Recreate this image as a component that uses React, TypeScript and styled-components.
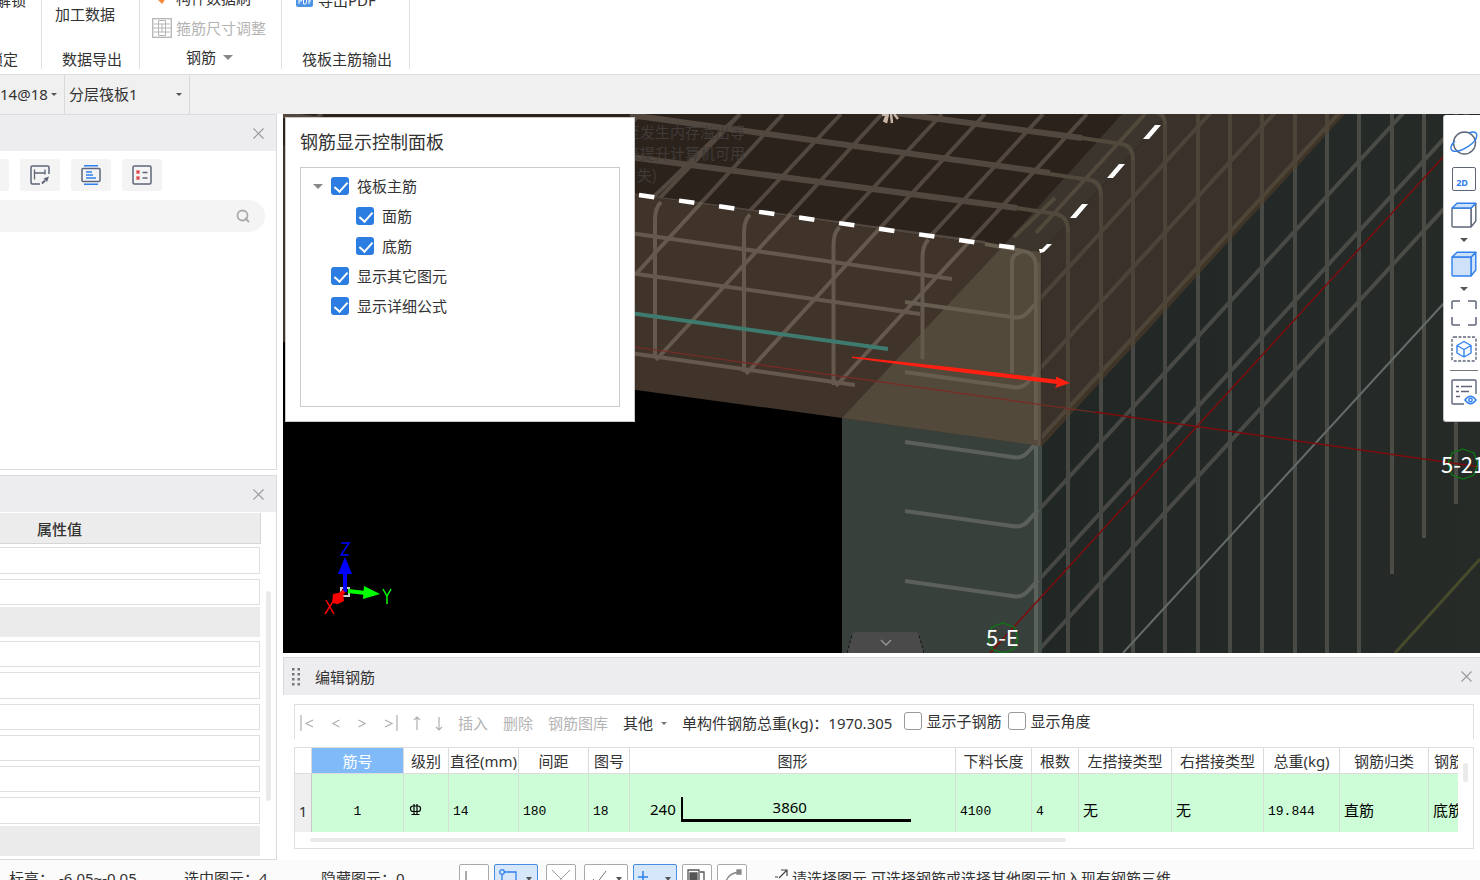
import React from "react";
import styled, { createGlobalStyle } from "styled-components";

const GlobalStyle = createGlobalStyle`
  * { box-sizing: border-box; }
  body {
    margin: 0;
    overflow: hidden;
    background: #fff;
    color: #333;
    font: 15px/20px "Noto Sans", "Noto Sans CJK SC", sans-serif;
  }
  button, input, select { font: inherit; color: inherit; }
  svg { display: block; flex: none; }
`;

const Shell = styled.div`
  display: flex;
  flex-direction: column;
  height: 100vh;
  overflow: hidden;
`;

const PlainButton = styled.button<{ $dim?: boolean; $gap?: number }>`
  display: flex;
  align-items: center;
  gap: ${(p) => p.$gap || 0}px;
  flex: none;
  padding: 0;
  border: 0;
  background: none;
  white-space: nowrap;
  color: ${(p) => (p.$dim ? "#b4b4b4" : "#333")};
`;

/* ---------- ribbon ---------- */

const Ribbon = styled.header`
  display: flex;
  flex: none;
  height: 75px;
  padding-bottom: 5px;
  border-bottom: 1px solid #dcdcdc;
  overflow: hidden;
`;

const RibbonGroup = styled.section<{ $width: number; $align?: string }>`
  display: flex;
  flex-direction: column;
  justify-content: flex-end;
  align-items: ${(p) => p.$align || "flex-start"};
  flex: none;
  width: ${(p) => p.$width}px;
  border-right: 1px solid #dedee2;
`;

const RibbonItem = styled.div<{ $left?: number; $right?: number; $below: number }>`
  flex: none;
  margin: 0 ${(p) => p.$right || 0}px ${(p) => p.$below}px ${(p) => p.$left || 0}px;
  height: 20px;
  white-space: nowrap;
`;

/* ---------- selector bar ---------- */

const SelectorBar = styled.nav`
  display: flex;
  flex: none;
  height: 39px;
  background: #f0f0f0;
`;

const Picker = styled.div<{ $width: number }>`
  display: flex;
  align-items: center;
  justify-content: space-between;
  flex: none;
  width: ${(p) => p.$width}px;
  padding: 0 7px 1px 0;
  border-right: 1px solid #d9d9d9;
`;

const PickerSelect = styled.select<{ $inset: number }>`
  flex: 1;
  min-width: 0;
  padding: 0 0 0 ${(p) => p.$inset}px;
  border: 0;
  background: none;
  appearance: none;
`;

/* ---------- body ---------- */

const Body = styled.main`
  display: grid;
  grid-template-columns: 277px minmax(0, 1fr);
  gap: 6px;
  flex: 1;
  min-height: 0;
`;

const LeftColumn = styled.aside`
  display: grid;
  grid-template-rows: 356fr 384fr;
  gap: 5px;
  min-height: 0;
`;

const Panel = styled.section`
  display: flex;
  flex-direction: column;
  min-height: 0;
  border: solid #dcdce0;
  border-width: 1px 1px 1px 0;
`;

const PanelHeader = styled.div`
  display: flex;
  align-items: center;
  justify-content: flex-end;
  flex: none;
  height: 36px;
  padding-right: 12px;
  background: #ededf0;
`;

const ToolRow = styled.div`
  display: flex;
  gap: 11px;
  margin: 8px 0 0 -31px;
`;

const ToolButton = styled.button`
  display: grid;
  place-items: center;
  width: 40px;
  height: 32px;
  padding: 0;
  border: 0;
  border-radius: 3px;
  background: #f4f4f5;
`;

const SearchBox = styled.label`
  display: flex;
  align-items: center;
  height: 32px;
  margin: 9px 11px 0 0;
  padding-right: 15px;
  border-radius: 0 16px 16px 0;
  background: #f4f4f4;
`;

const SearchInput = styled.input`
  flex: 1;
  min-width: 0;
  border: 0;
  background: none;
  outline: none;
`;

const PropertyArea = styled.div`
  display: flex;
  flex: 1;
  min-height: 0;
  padding: 1px 5px 2px 0;
`;

const PropertyList = styled.div`
  display: flex;
  flex-direction: column;
  flex: 1;
  padding-right: 6px;
`;

const PropertyHead = styled.div`
  flex: none;
  height: 31px;
  margin-right: -1px;
  padding: 6px 37px;
  border: solid #d6d6d6;
  border-width: 0 1px 1px 0;
  background: #ececec;
  font-weight: 500;
`;

const PropertyRows = styled.div`
  display: grid;
  grid-auto-rows: minmax(0, 1fr);
  flex: 1;
  min-height: 0;
`;

const PropertyRow = styled.div<{ $group?: boolean }>`
  display: flex;
  min-height: 0;
  padding: ${(p) => (p.$group ? "0 0 1px" : "3px 0 2px")};
`;

const PropertyGroup = styled.div`
  flex: 1;
  background: #ebebeb;
`;

const PropertyInput = styled.input`
  flex: 1;
  min-width: 0;
  border: solid #dfdfdf;
  border-width: 1px 1px 1px 0;
  background: #fff;
`;

const VerticalThumb = styled.div<{ $top: number; $height: number }>`
  flex: none;
  width: 5px;
  height: ${(p) => p.$height}px;
  margin-top: ${(p) => p.$top}px;
  border-radius: 3px;
  background: #eaeaea;
`;

/* ---------- 3D view ---------- */

const RightColumn = styled.div`
  display: grid;
  grid-template-rows: minmax(0, 1fr) auto;
  gap: 4px;
  min-height: 0;
`;

const Viewport = styled.section`
  position: relative;
  min-height: 0;
  overflow: hidden;
  background: #000;
`;

const SceneSvg = styled.svg`
  width: 100%;
  height: 100%;
`;

const DisplayPanel = styled.section`
  position: absolute;
  top: 3px;
  left: 2px;
  width: 350px;
  height: 305px;
  padding: 13px 14px;
  border: 1px solid #c9c9c9;
  background: #fff;
`;

const DisplayTitle = styled.h2`
  margin: 0 0 14px;
  font-size: 18px;
  font-weight: 400;
  line-height: 22px;
`;

const Tree = styled.div`
  height: 240px;
  padding-top: 3px;
  border: 1px solid #ccc;
`;

const TreeRow = styled.div<{ $depth: number }>`
  display: flex;
  align-items: center;
  gap: 8px;
  height: 30px;
  padding-left: ${(p) => 12 + p.$depth * 25}px;
`;

const TreeToggle = styled.span`
  width: 10px;
`;

const CheckLabel = styled.label<{ $gap: number }>`
  display: flex;
  align-items: center;
  gap: ${(p) => p.$gap}px;
  white-space: nowrap;
`;

const CheckInput = styled.input`
  appearance: none;
  flex: none;
  width: 18px;
  height: 18px;
  margin: 0;
  border: 1px solid #999;
  border-radius: 3px;
  background: #fff;
  &:checked {
    border: 0;
    background: #2b7de1;
  }
  &:checked::after {
    content: "";
    display: block;
    width: 6px;
    height: 11px;
    margin: 2px 0 0 6px;
    border: solid #fff;
    border-width: 0 2px 2px 0;
    transform: rotate(42deg);
  }
`;

const ViewRail = styled.div`
  position: absolute;
  top: 1px;
  right: 0;
  display: flex;
  flex-direction: column;
  width: 37px;
  padding: 10px 0 11px;
  border: solid #c4c4c4;
  border-width: 0 0 1px 1px;
  border-radius: 3px 0 0 3px;
  background: #fff;
`;

const RailButton = styled.button<{ $short?: boolean }>`
  display: flex;
  align-items: center;
  justify-content: center;
  height: ${(p) => (p.$short ? 13 : 36)}px;
  padding: 0 0 0 4px;
  border: 0;
  background: none;
`;

const RailDivider = styled.hr`
  width: 28px;
  margin: 3px 0 3px 6px;
  border: 0;
  border-top: 1px solid #777;
`;

const CollapseTab = styled.button`
  position: absolute;
  bottom: 0;
  left: 564px;
  width: 77px;
  height: 21px;
  padding: 0;
  border: 0;
  background: none;
`;

/* ---------- rebar editor ---------- */

const Editor = styled.section`
  border-top: 1px solid #d8d8dc;
  padding-bottom: 11px;
`;

const EditorHeader = styled.div`
  display: flex;
  align-items: center;
  gap: 15px;
  height: 37px;
  padding: 0 8px 0 8px;
  border-left: 1px solid #d8d8dc;
  background: #ededf0;
`;

const EditorTitle = styled.h2`
  flex: 1;
  margin: 0;
  font: inherit;
`;

const EditorTools = styled.div`
  display: flex;
  align-items: center;
  gap: 15px;
  height: 35px;
  margin: 9px 6px 8px 11px;
  padding: 2px 0 0 5px;
  border: solid #dedede;
  border-width: 1px 1px 0 1px;
`;

const NavGroup = styled.div<{ $gap: number }>`
  display: flex;
  gap: ${(p) => p.$gap}px;
`;

const Options = styled.div`
  display: flex;
  gap: 7px;
  margin: 0 0 4px -3px;
`;

const TableFrame = styled.div`
  display: grid;
  grid-template-columns: minmax(0, 1fr) 5px;
  column-gap: 5px;
  margin: 0 6px 0 11px;
  padding: 0 5px 6px 0;
  border: 1px solid #dedede;
`;

const RebarTable = styled.table`
  width: 100%;
  table-layout: fixed;
  border-collapse: separate;
  border-spacing: 0;
`;

const HeadCell = styled.th<{ $active?: boolean; $left?: boolean }>`
  height: 26px;
  padding: ${(p) => (p.$left ? "0 0 0 5px" : "0")};
  overflow: hidden;
  border: solid #dcdcdc;
  border-width: 0 ${(p) => (p.$left ? 0 : 1)}px 1px 0;
  background: ${(p) => (p.$active ? "#80baf8" : "#fff")};
  color: ${(p) => (p.$active ? "#fff" : "#333")};
  font-weight: 400;
  text-align: ${(p) => (p.$left ? "left" : "center")};
  white-space: nowrap;
`;

const RowHead = styled.th`
  height: 58px;
  padding: 15px 0 0;
  border-right: 1px solid #c9c9c9;
  background: #efefef;
  font-weight: 400;
`;

const Cell = styled.td<{ $center?: boolean; $last?: boolean }>`
  height: 58px;
  padding: ${(p) => (p.$center ? "14px 0 0" : "14px 0 0 4px")};
  overflow: hidden;
  border-right: ${(p) => (p.$last ? 0 : 1)}px solid #d5dfd5;
  background: #ccfdd6;
  color: #000;
  font: 15px/20px "Noto Sans CJK SC", sans-serif;
  text-align: ${(p) => (p.$center ? "center" : "left")};
  white-space: nowrap;
`;

const Mono = styled.span`
  font: 13px/20px "Liberation Mono", monospace;
`;

const ShapeCell = styled(Cell)`
  padding: 0 0 0 20px;
  font-family: "Noto Sans", sans-serif;
`;

const Shape = styled.div`
  display: flex;
  align-items: center;
  gap: 5px;
  padding-top: 12px;
`;

const BarOutline = styled.div`
  width: 230px;
  height: 25px;
  border: solid #000;
  border-width: 0 0 3px 2px;
  padding-right: 14px;
  text-align: center;
`;

const HorizontalThumb = styled.div`
  width: 65%;
  height: 4px;
  margin: 6px 0 0 15px;
  border-radius: 2px;
  background: #e9e9e9;
`;

/* ---------- status bar ---------- */

const StatusBar = styled.footer`
  display: flex;
  align-items: flex-start;
  flex: none;
  height: 20px;
  padding-left: 9px;
  background: #fbfbfb;
  white-space: nowrap;
`;

const StatusText = styled.span<{ $width: number }>`
  flex: none;
  width: ${(p) => p.$width}px;
  padding-top: 8px;
`;

const StatusButtons = styled.div`
  display: flex;
  gap: 5px;
  padding: 4px 28px 0 0;
`;

const StatusButton = styled.button<{ $wide?: boolean; $on?: boolean; $after?: number }>`
  display: flex;
  gap: 7px;
  flex: none;
  width: ${(p) => (p.$wide ? 44 : 30)}px;
  height: 30px;
  margin-right: ${(p) => p.$after || 0}px;
  padding: 4px 4px 0 4px;
  border: 1px solid ${(p) => (p.$on ? "#4a8de0" : "#aaa")};
  border-radius: 2px;
  background: ${(p) => (p.$on ? "#d6e6fb" : "#fff")};
`;

/* ---------- small drawings ---------- */

const CloseIcon = () => (
  <svg width="11" height="11" viewBox="0 0 11 11" stroke="#9a9a9e" strokeWidth="1.2">
    <path d="M.5.5l10 10M10.5.5l-10 10" />
  </svg>
);

const Caret = ({ size = 8, color = "#555" }: { size?: number; color?: string }) => (
  <svg width={size} height={size / 2} viewBox="0 0 8 4" fill={color}>
    <path d="M0 0h8L4 4z" />
  </svg>
);

const INK = "#5d6577";
const BLUE = "#2f80ed";

const IconH = () => (
  <svg width="20" height="20" viewBox="0 0 20 20" fill="none" stroke={INK} strokeWidth="1.5">
    <path d="M10 19H2.500Q1 19 1 17.500V2.500Q1 1 2.500 1H17.500Q19 1 19 2.500V9" />
    <path d="M4.500 4.500v10M4.500 8h10.500M15 4.500v5" strokeWidth="1.300" />
    <path d="M12 18.500l3-3" strokeWidth="2" />
    <path d="M13.500 13.500l3.500 3.500 2-5.500z" fill={INK} stroke="none" />
  </svg>
);

const IconLines = () => (
  <svg width="20" height="20" viewBox="0 0 20 20" fill="none">
    <rect x="1" y="3.500" width="18" height="13" rx="1" stroke={INK} strokeWidth="1.500" />
    <path d="M3 .8h14M3 19.200h14M5 7h6M5 10h7M5 13h10" stroke={BLUE} strokeWidth="1.400" />
  </svg>
);

const IconList = () => (
  <svg width="20" height="20" viewBox="0 0 20 20" fill="none">
    <rect x="1" y="1" width="18" height="18" rx="1.500" stroke={INK} strokeWidth="1.500" />
    <path d="M4.500 5.500l3 3m0-3l-3 3M4.500 11.500l3 3m0-3l-3 3" stroke="#e23c3c" strokeWidth="1.500" />
    <path d="M10.500 7.500h5M10.500 13h5" stroke={INK} strokeWidth="1.500" />
  </svg>
);

const IconStirrup = () => (
  <svg width="20" height="20" viewBox="0 0 20 20" fill="none" stroke="#b4b4b4">
    <rect x=".7" y=".7" width="18.600" height="18.600" strokeWidth="1.300" />
    <path d="M6.500 17.500v-15h7v15zM2 6h16M2 14h16M10 6v8M1 10h18" />
  </svg>
);

const IconBrush = () => (
  <svg width="14" height="12" viewBox="0 0 14 12">
    <path d="M0 5l7-5 5 5-5 7z" fill="#f58a3c" />
    <path d="M10 7l4-4v3z" fill="#5aa2f0" />
  </svg>
);

const IconPdf = () => (
  <svg width="17" height="14" viewBox="0 0 17 14">
    <rect width="17" height="14" rx="2" fill="#4d93e6" />
    <path d="M3 11V5h2.500v3H3M7.500 5v6H9q1.500 0 1.500-1.500v-3Q10.500 5 9 5zM13 11V5h2.500M13 8h2" fill="none" stroke="#fff" />
  </svg>
);

const IconCube = ({ filled }: { filled?: boolean }) => (
  <svg width="26" height="26" viewBox="0 0 26 26" strokeWidth="1.400" strokeLinejoin="round">
    <path d="M20 6l4.800-4.500V19L20 25z" fill={filled ? "#cfe1f9" : "#fff"} stroke={filled ? BLUE : INK} />
    <rect x="1" y="6" width="19" height="19" rx="1" fill={filled ? "#cfe1f9" : "#fff"} stroke={filled ? BLUE : INK} />
    <path d="M1 6l5-4.700h18.800L20 6z" fill="#cfe1f9" stroke={BLUE} />
  </svg>
);

const IconOrbit = () => (
  <svg width="28" height="26" viewBox="0 0 28 26" fill="none" strokeWidth="1.400">
    <circle cx="14.500" cy="13" r="11" stroke={INK} />
    <path d="M5 11C0 15 0 20 3 21c6 2 26-8 23.500-17C26 1.500 22 1.500 19 3" stroke={BLUE} />
  </svg>
);

const Label2D = styled.span`
  display: flex;
  align-items: flex-end;
  justify-content: center;
  width: 24px;
  height: 24px;
  padding: 0 4px 2px 0;
  border: 1px solid ${INK};
  border-radius: 2px;
  color: ${BLUE};
  font: 700 9px/10px "Noto Sans", sans-serif;
`;

const IconFit = () => (
  <svg width="26" height="26" viewBox="0 0 26 26" fill="none" stroke={INK} strokeWidth="1.500">
    <path d="M1 9V2Q1 1 2 1h7M17 1h7q1 0 1 1v7M25 17v7q0 1-1 1h-7M9 25H2q-1 0-1-1v-7" />
  </svg>
);

const IconIsolate = () => (
  <svg width="26" height="26" viewBox="0 0 26 26" fill="none" strokeWidth="1.400">
    <rect x="1" y="1" width="24" height="24" rx="2" stroke={INK} strokeDasharray="3 1.500" />
    <path d="M13 5.500l7 4v7.500l-7 4-7-4V9.500zM6 9.500l7 4 7-4M13 13.500V21" stroke={BLUE} strokeLinejoin="round" />
  </svg>
);

const IconListEye = () => (
  <svg width="26" height="26" viewBox="0 0 26 26" fill="none" strokeWidth="1.400">
    <path d="M13 25H2q-1 0-1-1V2q0-1 1-1h22q1 0 1 1v13" stroke={INK} />
    <path d="M5 7.500h3m2 0h11M5 12.500h3m2 0h8M5 17.500h4" stroke={INK} />
    <path d="M14 21q5.500-7.500 11 0-5.500 7.500-11 0z" stroke={BLUE} />
    <circle cx="19.500" cy="21" r="1.700" stroke={BLUE} />
  </svg>
);

/* ---------- scene ---------- */

const TOP_SHADE = "#53483f";
const wallColumns = [1068, 1101, 1133, 1165, 1198, 1230, 1262, 1295, 1327, 1359, 1392, 1424, 1456];
const columnTop = (x: number) => ({ 1068: 232, 1101: 196, 1133: 160, 1165: 124 } as Record<number, number>)[x] || 110;
const columnEnd = (x: number) => ({ 1392: 574, 1424: 538, 1456: 504 } as Record<number, number>)[x] || 660;
const hooks = [302, 372, 442, 511, 581];
const hookPath = (y: number) => `M905 ${y}l107 15Q1021 ${y + 17} 1027 ${y + 11}l11 -12`;
const sideDiagonals = [163, 233, 303, 373, 443, 513, 583, 653];

const Scene = () => (
  <SceneSvg viewBox="283 114 1197 539" preserveAspectRatio="xMinYMin slice" fill="none" role="img" aria-label="筏板三维视图">
    <defs>
      <clipPath id="slabSide">
        <path d="M1041 252L1168 114H1345L1042 446z" />
      </clipPath>
      <clipPath id="slabTop">
        <path d="M283 114H1168L1041 252 283 145z" />
      </clipPath>
      <linearGradient id="wallShade" x1="0" x2="1">
        <stop offset="0" stopColor="#212725" />
        <stop offset="1" stopColor="#262b28" />
      </linearGradient>
      <g id="sideBars">
        {wallColumns.map((x) => (
          <path key={x} d={`M${x} ${columnTop(x)}V${columnEnd(x)}`} />
        ))}
        {sideDiagonals.map((y) => (
          <path key={y} d={`M1036 ${y}l460 -501`} />
        ))}
      </g>
    </defs>

    <path d="M842 380H1042V653H842z" fill="#38403b" />
    <path d="M1042 100H1480V653H1042z" fill="url(#wallShade)" />
    <use href="#sideBars" stroke="#e9d8c8" strokeWidth="4" opacity=".19" />
    <path d="M1036 420V653" stroke="#5c625c" strokeWidth="4" />
    <path d="M1040 430V653" stroke="#434b46" strokeWidth="4" />
    <g stroke="#5c605b" strokeWidth="4">
      {hooks.slice(2).map((y) => (
        <path key={y} d={hookPath(y)} />
      ))}
    </g>
    <path d="M1123 653L1445 302" stroke="#656b69" strokeWidth="2" />
    <path d="M1395 653L1480 559" stroke="#474b2c" strokeWidth="3" />

    <path d="M1041 252L1168 114H1345L1042 446z" fill="#3a332b" />
    <path d="M1041 438L1337 114H1345L1042 446z" fill="#42362a" opacity=".7" />
    <g clipPath="url(#slabSide)">
      <use href="#sideBars" stroke="#ecdcb8" strokeWidth="4" opacity=".1" />
    </g>

    <path d="M283 114H1168L1041 252 283 145z" fill="#2b221c" />
    <path d="M1002 247L1122 114H1168L1041 252z" fill="#3b352e" />
    <path d="M283 145L1041 252 1042 446 842 418 283 342z" fill="#3f332a" />
    <path d="M842 418L1002 247 1041 252V446z" fill="#52493b" />

    <g clipPath="url(#slabTop)" stroke={TOP_SHADE}>
      <path d="M283 155L630 -221M555 203L640 114M567 280L740 114" strokeWidth="4" />
      {[740, 841, 942, 1043].map((x, i) => (
        <path key={x} d={`M${655 + i * 90} ${203 + i * 13}L${x} 114`} strokeWidth="4" />
      ))}
      {[783, 882, 985, 1087].map((x) => (
        <path key={x} d={`M${x} 114l-138 150`} strokeWidth="4" />
      ))}
      <path d="M630 115L1050 173M630 157L1017 208M895 113L1082 138M283 115L630 157" strokeWidth="6" />
      <path d="M630 195L985 243" strokeWidth="4" />
    </g>
    <g stroke="#50493c" strokeWidth="4">
      <path d="M1017 208L1056 214Q1068 216 1068 232M1050 174L1090 180Q1101 182 1101 196M1082 138L1122 144Q1133 146 1133 160M1150 111Q1165 112 1165 124" />
      <path d="M1036 233L1145 114M1014 237L1055 198" />
    </g>

    <g stroke="#65584c" strokeWidth="4" strokeLinejoin="round">
      {[655, 744, 833.5, 922.500].map((x, i) => (
        <path key={x} d={`M${x + 6} ${202 + i * 12.500}Q${x} ${208 + i * 12.500} ${x} ${220 + i * 12.500}V${[358, 372, 385, 359][i]}`} />
      ))}
      <path d="M635 275L702 202M656 360L791 214M746 374L880 228M836 386L969 242" />
      <path d="M630 233L952 279M630 273L920 314M630 353L855 385" />
    </g>
    <g stroke="#685e50" strokeWidth="4">
      <path d="M1012 373V262Q1012 254 1022 252M985 244L1023 251Q1036 253 1036 267V440" />
      {hooks.slice(0, 2).map((y) => (
        <path key={y} d={hookPath(y)} />
      ))}
    </g>
    <path d="M1039 262V446" stroke="#5e5446" strokeWidth="3" />
    <path d="M630 313L888 349" stroke="#3f7a6f" strokeWidth="4" />

    <path d="M639 195L1016 248" stroke="#fff" strokeWidth="4.500" strokeDasharray="15.500 24.900" />
    <path d="M1070 218h6l12-14h-6zM1107 178h6l12-14h-6zM1143 139h6l12-14h-6zM1039 249l1 4 4-1 8-8h-5l-5 5z" fill="#fff" />
    <path d="M882 115l5-1-3 8M888 114l-2 9M891 114l1 9M894 114l4 5" stroke="#c9b5a6" strokeWidth="2.500" />

    <path d="M635 347L1100 413" stroke="#7a2b24" strokeWidth="1.200" />
    <path d="M1095 412L1480 467M990 653L1445 155" stroke="#7d0d0d" strokeWidth="1.500" />
    <path d="M852 356.500L950 367 1056 379.500V376.500L1070 383 1055 388 1057 384 950 371 852 358z" fill="#ff2012" />

    <path d="M1463 449l11 4 4 11-4 11-11 4-11-4-4-11 4-11zM1003 623l11 4 4 11-4 11-11 4-11-4-4-11 4-11z" stroke="#0b7a12" strokeWidth="1.300" />
    <g fill="#fff" fontFamily="'Noto Sans CJK SC', sans-serif" fontSize="22">
      <text x="1441" y="473">5-21</text>
      <text x="986" y="646">5-E</text>
    </g>
    <g fill="#403b38" fontFamily="'Noto Sans CJK SC', sans-serif" fontSize="15">
      <text x="625" y="138">至发生内存溢出等</text>
      <text x="625" y="159">来提升计算机可用</text>
      <text x="637" y="181">失)</text>
    </g>

    <g strokeWidth="4">
      <path d="M341 588h8v8h-8z" stroke="#ccc" strokeWidth="2" />
      <path d="M345 592V568" stroke="#0000ff" />
      <path d="M345 557l7 17h-14z" fill="#0000ff" />
      <path d="M348 591l18 2" stroke="#00ff00" />
      <path d="M364 586l16 8-17 5z" fill="#00ff00" />
      <path d="M344 591l-6 6" stroke="#ff0000" />
      <path d="M333 594l10-2 1 9-6 3-6-1z" fill="#ff0000" />
    </g>
    <g strokeWidth="1.500">
      <path d="M341 543h8l-8 12h8" stroke="#0000ff" />
      <path d="M383 589l4 7 4-7M387 596v8" stroke="#00ff00" />
      <path d="M326 600l8 14M334 600l-9 14" stroke="#ff0000" />
    </g>
  </SceneSvg>
);

/* ---------- data ---------- */

const propertyRows = [0, 0, 1, 0, 0, 0, 0, 0, 0, 1];

const treeItems = [
  { label: "筏板主筋", depth: 0, open: true },
  { label: "面筋", depth: 1 },
  { label: "底筋", depth: 1 },
  { label: "显示其它图元", depth: 0 },
  { label: "显示详细公式", depth: 0 },
];

const columns: [string, number | undefined][] = [
  ["筋号", 92],
  ["级别", 45],
  ["直径(mm)", 70],
  ["间距", 70],
  ["图号", 41],
  ["图形", undefined],
  ["下料长度", 76],
  ["根数", 47],
  ["左搭接类型", 93],
  ["右搭接类型", 92],
  ["总重(kg)", 76],
  ["钢筋归类", 89],
  ["钢筋", 29],
];

const navPaths = [
  { name: "首行", w: 14, d: "M1 0v16M13 5L6 8.500l7 3.500" },
  { name: "上一行", w: 8, d: "M7.500 5L1 8.500 7.500 12" },
  { name: "下一行", w: 8, d: "M.5 5L7 8.500.5 12" },
  { name: "末行", w: 14, d: "M1 5l7 3.500L1 12M13 0v16" },
];

export default function App() {
  return (
    <Shell>
      <GlobalStyle />
      <Ribbon>
        <RibbonGroup $width={42} $align="flex-end">
          <RibbonItem $right={15} $below={39}><PlainButton>解锁</PlainButton></RibbonItem>
          <RibbonItem $right={23} $below={0}>锁定</RibbonItem>
        </RibbonGroup>
        <RibbonGroup $width={98}>
          <RibbonItem $left={13} $below={25}><PlainButton>加工数据</PlainButton></RibbonItem>
          <RibbonItem $left={20} $below={0}>数据导出</RibbonItem>
        </RibbonGroup>
        <RibbonGroup $width={142}>
          <RibbonItem $left={15} $below={10}><PlainButton $gap={7}><IconBrush />构件数据刷</PlainButton></RibbonItem>
          <RibbonItem $left={12} $below={9}><PlainButton $dim $gap={4}><IconStirrup />箍筋尺寸调整</PlainButton></RibbonItem>
          <RibbonItem $left={46} $below={2}><PlainButton $gap={7}>钢筋<Caret size={10} color="#888" /></PlainButton></RibbonItem>
        </RibbonGroup>
        <RibbonGroup $width={128}>
          <RibbonItem $left={14} $below={39}><PlainButton $gap={5}><IconPdf />导出PDF</PlainButton></RibbonItem>
          <RibbonItem $left={20} $below={0}>筏板主筋输出</RibbonItem>
        </RibbonGroup>
      </Ribbon>

      <SelectorBar>
        <Picker $width={65}>
          <PickerSelect $inset={0} aria-label="规格"><option>14@18</option></PickerSelect>
          <Caret size={6} />
        </Picker>
        <Picker $width={125}>
          <PickerSelect $inset={4} aria-label="分层"><option>分层筏板1</option></PickerSelect>
          <Caret size={6} />
        </Picker>
      </SelectorBar>

      <Body>
        <LeftColumn>
          <Panel>
            <PanelHeader><PlainButton aria-label="关闭"><CloseIcon /></PlainButton></PanelHeader>
            <ToolRow>
              <ToolButton aria-label="新建" />
              <ToolButton aria-label="复制"><IconH /></ToolButton>
              <ToolButton aria-label="层间"><IconLines /></ToolButton>
              <ToolButton aria-label="列表"><IconList /></ToolButton>
            </ToolRow>
            <SearchBox>
              <SearchInput type="text" aria-label="搜索" />
              <svg width="14" height="14" viewBox="0 0 14 14" fill="none" stroke="#aaa" strokeWidth="1.800">
                <circle cx="6.500" cy="6.500" r="5" />
                <path d="M9 9l4 4" />
              </svg>
            </SearchBox>
          </Panel>
          <Panel>
            <PanelHeader><PlainButton aria-label="关闭"><CloseIcon /></PlainButton></PanelHeader>
            <PropertyArea>
              <PropertyList>
                <PropertyHead>属性值</PropertyHead>
                <PropertyRows>
                  {propertyRows.map((group, i) => (
                    <PropertyRow key={i} $group={!!group}>
                      {group ? <PropertyGroup /> : <PropertyInput type="text" aria-label={`属性值 ${i + 1}`} />}
                    </PropertyRow>
                  ))}
                </PropertyRows>
              </PropertyList>
              <VerticalThumb $top={78} $height={210} />
            </PropertyArea>
          </Panel>
        </LeftColumn>

        <RightColumn>
          <Viewport>
            <Scene />
            <DisplayPanel>
              <DisplayTitle>钢筋显示控制面板</DisplayTitle>
              <Tree>
                {treeItems.map((item) => (
                  <TreeRow key={item.label} $depth={item.depth}>
                    <TreeToggle>{item.open && <Caret size={10} color="#888" />}</TreeToggle>
                    <CheckLabel $gap={8}>
                      <CheckInput type="checkbox" defaultChecked />
                      {item.label}
                    </CheckLabel>
                  </TreeRow>
                ))}
              </Tree>
            </DisplayPanel>
            <ViewRail>
              <RailButton aria-label="动态观察"><IconOrbit /></RailButton>
              <RailButton aria-label="二维"><Label2D>2D</Label2D></RailButton>
              <RailButton aria-label="俯视"><IconCube /></RailButton>
              <RailButton $short aria-label="视图选项"><Caret /></RailButton>
              <RailButton aria-label="实体"><IconCube filled /></RailButton>
              <RailButton $short aria-label="显示选项"><Caret /></RailButton>
              <RailButton aria-label="全屏"><IconFit /></RailButton>
              <RailButton aria-label="局部三维"><IconIsolate /></RailButton>
              <RailDivider />
              <RailButton aria-label="显示设置"><IconListEye /></RailButton>
            </ViewRail>
            <CollapseTab aria-label="收起">
              <svg width="77" height="21" viewBox="0 0 77 21">
                <path d="M0 21L5 3Q6 0 9 0H68Q71 0 72 3L77 21z" fill="#4a4a4a" />
                <path d="M0 21L5 3M77 21L72 3" stroke="#111" strokeDasharray="3 2" />
                <path d="M34 8l5 5 5-5" fill="none" stroke="#999" strokeWidth="1.300" />
              </svg>
            </CollapseTab>
          </Viewport>

          <Editor>
            <EditorHeader>
              <svg width="8" height="18" viewBox="0 0 8 18" fill="#77777b">
                {[0, 5, 10, 15].map((y) => (
                  <path key={y} d={`M0 ${y}h2.500v2.500H0zM5.500 ${y}H8v2.500H5.500z`} />
                ))}
              </svg>
              <EditorTitle>编辑钢筋</EditorTitle>
              <PlainButton aria-label="关闭"><CloseIcon /></PlainButton>
            </EditorHeader>
            <EditorTools>
              <NavGroup $gap={18}>
                {navPaths.map((n) => (
                  <PlainButton key={n.name} aria-label={n.name}>
                    <svg width={n.w} height="16" viewBox={`0 0 ${n.w} 16`} fill="none" stroke="#b0b0b0" strokeWidth="1.200">
                      <path d={n.d} />
                    </svg>
                  </PlainButton>
                ))}
              </NavGroup>
              <NavGroup $gap={14}>
                {["M4 14V1M1 4l3-3 3 3", "M4 1v13M1 11l3 3 3-3"].map((d, i) => (
                  <PlainButton key={d} aria-label={i ? "下移" : "上移"}>
                    <svg width="8" height="15" viewBox="0 0 8 15" fill="none" stroke="#b0b0b0" strokeWidth="1.200">
                      <path d={d} />
                    </svg>
                  </PlainButton>
                ))}
              </NavGroup>
              <PlainButton $dim>插入</PlainButton>
              <PlainButton $dim>删除</PlainButton>
              <PlainButton $dim>钢筋图库</PlainButton>
              <PlainButton $gap={8}>其他<Caret size={6} color="#777" /></PlainButton>
              <span>单构件钢筋总重(kg)：1970.305</span>
              <Options>
                <CheckLabel $gap={4}><CheckInput type="checkbox" />显示子钢筋</CheckLabel>
                <CheckLabel $gap={4}><CheckInput type="checkbox" />显示角度</CheckLabel>
              </Options>
            </EditorTools>
            <TableFrame>
              <RebarTable>
                <colgroup>
                  <col width={17} />
                  {columns.map(([name, width]) => (
                    <col key={name} width={width} />
                  ))}
                </colgroup>
                <thead>
                  <tr>
                    <HeadCell />
                    {columns.map(([name], i) => (
                      <HeadCell key={name} $active={i === 0} $left={i === columns.length - 1}>{name}</HeadCell>
                    ))}
                  </tr>
                </thead>
                <tbody>
                  <tr>
                    <RowHead scope="row">1</RowHead>
                    <Cell $center><Mono>1</Mono></Cell>
                    <Cell>
                      <svg width="15" height="12" viewBox="0 0 15 12" fill="none" stroke="#000" strokeWidth="1.200">
                        <rect x="2.500" y="2" width="10" height="5.500" rx="2.500" />
                        <path d="M6 0v10.500M9 0v10.500M3.500 10.500h8" />
                      </svg>
                    </Cell>
                    <Cell><Mono>14</Mono></Cell>
                    <Cell><Mono>180</Mono></Cell>
                    <Cell><Mono>18</Mono></Cell>
                    <ShapeCell>
                      <Shape>240<BarOutline>3860</BarOutline></Shape>
                    </ShapeCell>
                    <Cell><Mono>4100</Mono></Cell>
                    <Cell><Mono>4</Mono></Cell>
                    <Cell>无</Cell>
                    <Cell>无</Cell>
                    <Cell><Mono>19.844</Mono></Cell>
                    <Cell>直筋</Cell>
                    <Cell $last>底筋</Cell>
                  </tr>
                </tbody>
              </RebarTable>
              <VerticalThumb $top={15} $height={19} />
              <HorizontalThumb />
            </TableFrame>
          </Editor>
        </RightColumn>
      </Body>

      <StatusBar>
        <StatusText $width={50}>标高：</StatusText>
        <StatusText $width={125}>-6.05~-0.05</StatusText>
        <StatusText $width={137}>选中图元：4</StatusText>
        <StatusText $width={138}>隐藏图元：0</StatusText>
        <StatusButtons>
          <StatusButton aria-label="正交"><svg width="20" height="20" viewBox="0 0 20 20" fill="none" stroke="#555"><path d="M2 2v14h14" /></svg></StatusButton>
          <StatusButton $wide $on $after={3} aria-label="对象捕捉">
            <svg width="20" height="20" viewBox="0 0 20 20" fill="none" stroke={BLUE} strokeWidth="1.300"><circle cx="3" cy="3" r="2.300" /><path d="M5 3h12v14H3V6" /></svg>
            <svg width="6" height="14" viewBox="0 0 6 14"><path d="M0 8h6l-3 4z" fill="#555" /></svg>
          </StatusButton>
          <StatusButton $after={3} aria-label="交点"><svg width="20" height="20" viewBox="0 0 20 20" fill="none" stroke="#999"><path d="M1 1l9 9 9-9M10 10v8" /></svg></StatusButton>
          <StatusButton $wide aria-label="极轴">
            <svg width="20" height="20" viewBox="0 0 20 20" fill="none" stroke="#777"><path d="M4 10l4 4L17 2" /></svg>
            <svg width="6" height="14" viewBox="0 0 6 14"><path d="M0 8h6l-3 4z" fill="#555" /></svg>
          </StatusButton>
          <StatusButton $wide $on aria-label="动态输入">
            <svg width="20" height="20" viewBox="0 0 20 20" fill="none" stroke={BLUE} strokeWidth="1.500"><path d="M5 2v12M0 8h10" /></svg>
            <svg width="6" height="14" viewBox="0 0 6 14"><path d="M0 8h6l-3 4z" fill="#555" /></svg>
          </StatusButton>
          <StatusButton aria-label="复制"><svg width="20" height="20" viewBox="0 0 20 20" fill="none" stroke="#555" strokeWidth="1.300"><path d="M1 1h11v16H1zM13 3h4v14h-4" /><path d="M3 4h7v12H3z" fill="#555" /></svg></StatusButton>
          <StatusButton aria-label="圆弧"><svg width="20" height="20" viewBox="0 0 20 20" fill="none" stroke="#888" strokeWidth="1.300"><path d="M3 17Q4 4 18 3" /><path d="M15 1h4v4h-4z" fill="#888" /></svg></StatusButton>
        </StatusButtons>
        <StatusText $width={17}>
          <svg width="14" height="14" viewBox="0 0 14 14" fill="none" stroke="#444" strokeWidth="1.200"><path d="M6 2h6v6M12 2L4 10M0 9h3" /></svg>
        </StatusText>
        <StatusText $width={380}>请选择图元,可选择钢筋或选择其他图元加入现有钢筋三维</StatusText>
      </StatusBar>
    </Shell>
  );
}
